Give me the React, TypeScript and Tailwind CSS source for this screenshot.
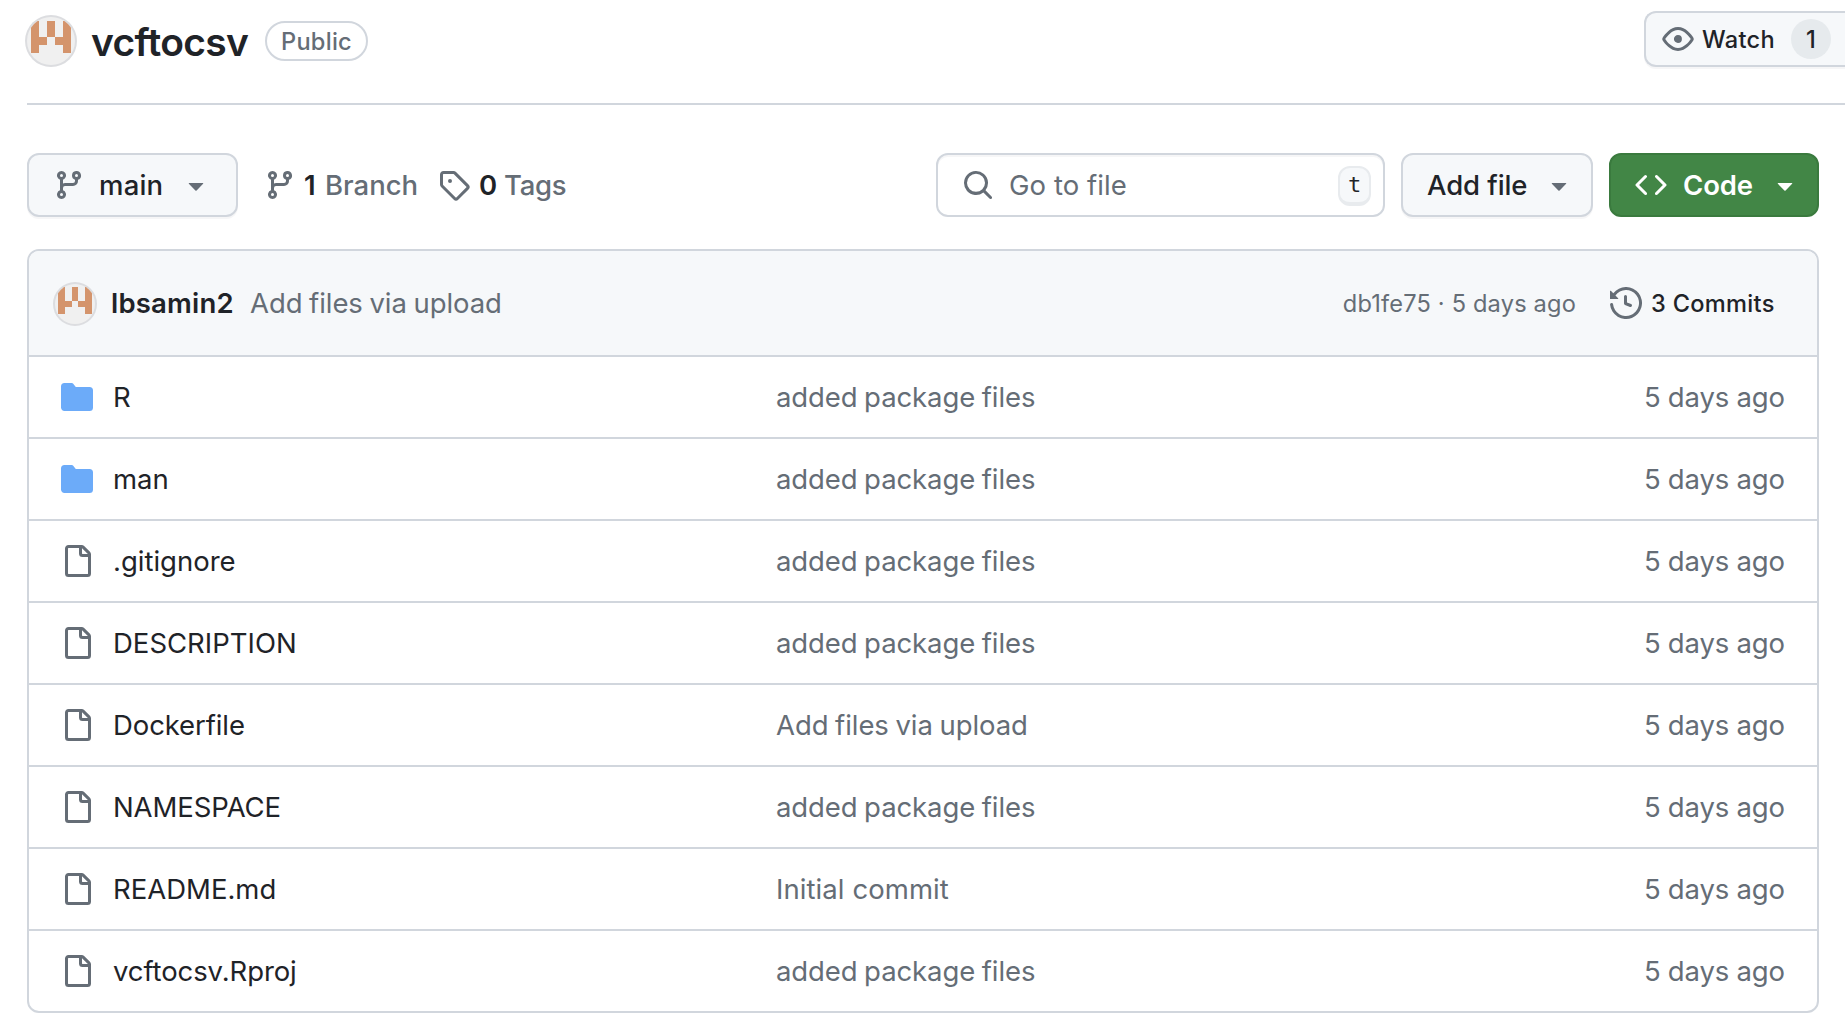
import type { ReactNode } from "react";

const paths = {
  eye: "M8 2c1.981 0 3.671.992 4.933 2.078 1.27 1.091 2.187 2.345 2.637 3.023a1.62 1.62 0 0 1 0 1.798c-.45.678-1.367 1.932-2.637 3.023C11.67 13.008 9.981 14 8 14c-1.981 0-3.671-.992-4.933-2.078C1.797 10.83.88 9.576.43 8.898a1.62 1.62 0 0 1 0-1.798c.45-.677 1.367-1.931 2.637-3.022C4.33 2.992 6.019 2 8 2ZM1.679 7.932a.12.12 0 0 0 0 .136c.411.622 1.241 1.75 2.366 2.717C5.176 11.758 6.527 12.5 8 12.5c1.473 0 2.825-.742 3.955-1.715 1.124-.967 1.954-2.096 2.366-2.717a.12.12 0 0 0 0-.136c-.412-.621-1.242-1.75-2.366-2.717C10.824 4.242 9.473 3.5 8 3.5c-1.473 0-2.825.742-3.955 1.715-1.124.967-1.954 2.096-2.366 2.717ZM8 10a2 2 0 1 1-.001-3.999A2 2 0 0 1 8 10Z",
  branch: "M9.5 3.25a2.25 2.25 0 1 1 3 2.122V6A2.5 2.5 0 0 1 10 8.5H6a1 1 0 0 0-1 1v1.128a2.251 2.251 0 1 1-1.5 0V5.372a2.25 2.25 0 1 1 1.5 0v1.836A2.493 2.493 0 0 1 6 7h4a1 1 0 0 0 1-1v-.628A2.25 2.25 0 0 1 9.5 3.25Zm-6 0a.75.75 0 1 0 1.5 0 .75.75 0 0 0-1.5 0Zm8.25-.75a.75.75 0 1 0 0 1.5.75.75 0 0 0 0-1.5ZM4.25 12a.75.75 0 1 0 0 1.5.75.75 0 0 0 0-1.5Z",
  tag: "M1 7.775V2.75C1 1.784 1.784 1 2.75 1h5.025c.464 0 .91.184 1.238.513l6.25 6.25a1.75 1.75 0 0 1 0 2.474l-5.026 5.026a1.75 1.75 0 0 1-2.474 0l-6.25-6.25A1.752 1.752 0 0 1 1 7.775Zm1.5 0c0 .066.026.13.073.177l6.25 6.25a.25.25 0 0 0 .354 0l5.025-5.025a.25.25 0 0 0 0-.354l-6.25-6.25a.25.25 0 0 0-.177-.073H2.75a.25.25 0 0 0-.25.25ZM6 5a1 1 0 1 1 0 2 1 1 0 0 1 0-2Z",
  search: "M10.68 11.74a6 6 0 0 1-7.922-8.982 6 6 0 0 1 8.982 7.922l3.04 3.04a.749.749 0 0 1-.326 1.275.749.749 0 0 1-.734-.215ZM11.5 7a4.499 4.499 0 1 0-8.997 0A4.499 4.499 0 0 0 11.5 7Z",
  code: "m11.28 3.22 4.25 4.25a.75.75 0 0 1 0 1.06l-4.25 4.25a.749.749 0 0 1-1.275-.326.749.749 0 0 1 .215-.734L13.94 8l-3.72-3.72a.749.749 0 0 1 .326-1.275.749.749 0 0 1 .734.215Zm-6.56 0a.751.751 0 0 1 1.042.018.751.751 0 0 1 .018 1.042L2.06 8l3.72 3.72a.749.749 0 0 1-.326 1.275.749.749 0 0 1-.734-.215L.47 8.53a.75.75 0 0 1 0-1.06Z",
  caret: "m4.427 7.427 3.396 3.396a.25.25 0 0 0 .354 0l3.396-3.396A.25.25 0 0 0 11.396 7H4.604a.25.25 0 0 0-.177.427Z",
  history: "m.427 1.927 1.215 1.215a8.002 8.002 0 1 1-1.6 5.685.75.75 0 1 1 1.493-.154 6.5 6.5 0 1 0 1.18-4.458l1.358 1.358A.25.25 0 0 1 3.896 6H.25A.25.25 0 0 1 0 5.75V2.104a.25.25 0 0 1 .427-.177ZM7.75 4a.75.75 0 0 1 .75.75v2.992l2.028.812a.75.75 0 0 1-.557 1.392l-2.5-1A.751.751 0 0 1 7 8.25v-3.5A.75.75 0 0 1 7.75 4Z",
  folder: "M1.75 1A1.75 1.75 0 0 0 0 2.75v10.5C0 14.216.784 15 1.75 15h12.5A1.75 1.75 0 0 0 16 13.25v-8.5A1.75 1.75 0 0 0 14.25 3H7.5a.25.25 0 0 1-.2-.1l-.9-1.2C6.07 1.26 5.55 1 5 1H1.75Z",
  file: "M2 1.75C2 .784 2.784 0 3.75 0h6.586c.464 0 .909.184 1.237.513l2.914 2.914c.329.328.513.773.513 1.237v9.586A1.75 1.75 0 0 1 13.25 16h-9.5A1.75 1.75 0 0 1 2 14.25Zm1.75-.25a.25.25 0 0 0-.25.25v12.5c0 .138.112.25.25.25h9.5a.25.25 0 0 0 .25-.25V6h-2.75A1.75 1.75 0 0 1 9 4.25V1.5Zm6.75.062V4.25c0 .138.112.25.25.25h2.688l-.011-.013-2.914-2.914-.013-.011Z",
};

function Icon({ name, className = "" }: { name: keyof typeof paths; className?: string }) {
  return (
    <svg viewBox="0 0 16 16" fill="currentColor" className={`size-8 shrink-0 ${className}`}>
      <path d={paths[name]} />
    </svg>
  );
}

function Slot({ className, children }: { className: string; children: ReactNode }) {
  return <span className={`block shrink-0 whitespace-nowrap text-left ${className}`}>{children}</span>;
}

function Avatar({ className }: { className: string }) {
  return (
    <svg viewBox="0 0 48 48" className={`shrink-0 rounded-full bg-[#f0f0f0] ring-2 ring-[#dcdde0] ${className}`}>
      <path
        fill="#d4946c"
        shapeRendering="crispEdges"
        d="M4 4h8v16h8v8h-8v8H4ZM20 4h8v16h-8ZM36 4h8v32h-8v-8h-8v-8h8Z"
      />
    </svg>
  );
}

const added = { message: "added package files", messageFit: "tracking-[-0.1px] [word-spacing:-1px]" };
const uploaded = { message: "Add files via upload", messageFit: "tracking-[-0.07px] [word-spacing:-1px]" };
const initial = { message: "Initial commit", messageFit: "tracking-[0.08px]" };

const files = [
  { name: "R", dir: true, fit: "", ...added },
  { name: "man", dir: true, fit: "", ...added },
  { name: ".gitignore", dir: false, fit: "", ...added },
  { name: "DESCRIPTION", dir: false, fit: "", ...added },
  { name: "Dockerfile", dir: false, fit: "tracking-[-0.1px]", ...uploaded },
  { name: "NAMESPACE", dir: false, fit: "tracking-[-0.1px]", ...added },
  { name: "README.md", dir: false, fit: "", ...initial },
  { name: "vcftocsv.Rproj", dir: false, fit: "tracking-[-0.1px]", ...added },
];

const button = "flex h-16 items-center rounded-xl border-2 border-[#d1d6dd] bg-[#f6f8fa] shadow-[0_2px_0_rgba(31,35,40,0.04)]";

export default function App() {
  return (
    <div className="h-[1035px] w-[1845px] overflow-hidden bg-white pl-[27px] font-['Inter',sans-serif] text-[27.5px] leading-8 text-[#1f2328]">
      <header className="flex h-[105px] items-start border-b-2 border-[#d1d6dd]">
        <Avatar className="mt-[17px] size-12" />
        <h1 className="mt-[18px] ml-4 w-[174px] whitespace-nowrap text-[39px] leading-[48px] font-semibold tracking-[-0.7px]">
          vcftocsv
        </h1>
        <span className="mt-[21px] flex h-10 w-[103px] items-center justify-center rounded-full border-2 border-[#d1d6dd] pt-[2px] text-[23.6px] font-medium tracking-[0.25px] text-[#656d76]">
          Public
        </span>
        <div className="mt-[11px] ml-auto flex h-14 w-[201px] items-center rounded-l-xl border-2 border-r-0 border-[#d1d6dd] bg-[#f6f8fa] pl-4 text-[23.6px] font-medium shadow-[0_2px_0_rgba(31,35,40,0.04)]">
          <Icon name="eye" className="text-[#656d76]" />
          <Slot className="ml-2 w-[89px] pt-[2px] tracking-[0.3px]">Watch</Slot>
          <span className="flex size-10 items-center justify-center rounded-full bg-[#e6eaed] pt-[2px]">1</span>
        </div>
      </header>

      <div className="mt-12 flex h-16 items-center">
        <button className={`${button} w-[211px] pl-6 font-medium`}>
          <Icon name="branch" className="text-[#656d76]" />
          <Slot className="ml-[14px] w-[81px] tracking-[0.2px]">main</Slot>
          <Icon name="caret" className="text-[#656d76]" />
        </button>
        <div className="ml-[26px] flex w-[174px] items-center font-medium text-[#656d76]">
          <Icon name="branch" />
          <Slot className="ml-2 w-[21px] font-semibold text-[#1f2328]">1</Slot>
          <Slot className="">Branch</Slot>
        </div>
        <div className="flex items-center font-medium text-[#656d76]">
          <Icon name="tag" />
          <Slot className="ml-[9px] w-[25px] font-semibold text-[#1f2328]">0</Slot>
          <Slot className="tracking-[-0.3px]">Tags</Slot>
        </div>
        <div className="ml-auto flex h-16 w-[449px] items-center rounded-xl border-2 border-[#d1d6dd] bg-white pl-6 text-[#656d76] shadow-[inset_0_2px_0_rgba(31,35,40,0.04)]">
          <Icon name="search" />
          <Slot className="ml-[15px] tracking-[0.05px]">Go to file</Slot>
          <kbd className="mt-[2px] mr-3 ml-auto flex h-10 w-[33px] items-center justify-center rounded-xl border-2 border-b-4 border-[#e8ebee] bg-[#f6f8fa] pb-px font-['DejaVu_Sans_Mono',monospace] text-[22px] text-[#1f2328]">
            t
          </kbd>
        </div>
        <button className={`${button} ml-4 w-[192px] pl-6 font-medium`}>
          <Slot className="w-[116px] tracking-[-0.1px]">Add file</Slot>
          <Icon name="caret" className="text-[#656d76]" />
        </button>
        <button className="mr-[26px] ml-4 flex h-16 w-[210px] items-center rounded-xl border-2 border-[#3a7a3e] bg-[#428646] pl-6 font-semibold text-white">
          <Icon name="code" />
          <Slot className="ml-4 w-[86px] tracking-[-0.1px]">Code</Slot>
          <Icon name="caret" />
        </button>
      </div>

      <section className="mt-8 w-[1792px] overflow-hidden rounded-xl border-2 border-[#d1d6dd]">
        <div className="flex h-[104px] items-center bg-[#f6f8fa] pl-[26px]">
          <Avatar className="mt-[2px] size-10" />
          <Slot className="ml-4 w-[139px] font-semibold tracking-[0.2px]">lbsamin2</Slot>
          <Slot className="tracking-[-0.07px] [word-spacing:-1px] text-[#656d76]">Add files via upload</Slot>
          <Slot className="mr-[34px] ml-auto pt-px text-[23.6px] tracking-[0.18px] text-[#656d76]">db1fe75 · 5 days ago</Slot>
          <Icon name="history" className="text-[#656d76]" />
          <Slot className="ml-[9px] w-[166px] pt-px text-[23.6px] font-medium tracking-[0.3px]">3 Commits</Slot>
        </div>
        {files.map((file) => (
          <div key={file.name} className="flex h-[82px] items-center border-t-2 border-[#d1d6dd] pl-8">
            <Icon name={file.dir ? "folder" : "file"} className={file.dir ? "text-[#6cabf9]" : "text-[#656d76]"} />
            <Slot className={`ml-5 w-[663px] ${file.fit}`}>{file.name}</Slot>
            <Slot className={`text-[#656d76] ${file.messageFit}`}>{file.message}</Slot>
            <Slot className="mr-8 ml-auto tracking-[-0.08px] [word-spacing:-0.5px] text-[#656d76]">5 days ago</Slot>
          </div>
        ))}
      </section>
    </div>
  );
}
